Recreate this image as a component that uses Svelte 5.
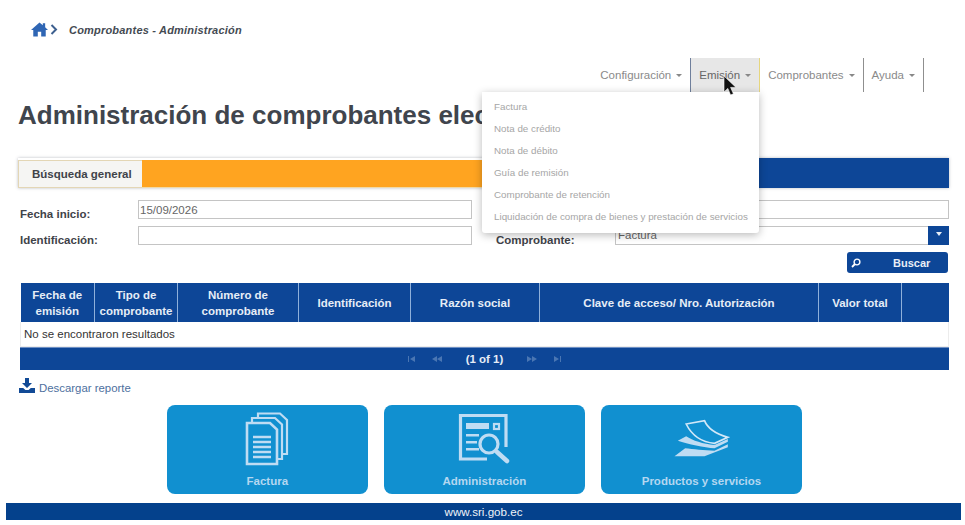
<script lang="ts">
  const navItems = ['Configuración', 'Emisión', 'Comprobantes', 'Ayuda'];
  const emision = [
    'Factura',
    'Nota de crédito',
    'Nota de débito',
    'Guía de remisión',
    'Comprobante de retención',
    'Liquidación de compra de bienes y prestación de servicios'
  ];
  const columns = [
    { label: ['Fecha de', 'emisión'], width: 74 },
    { label: ['Tipo de', 'comprobante'], width: 83 },
    { label: ['Número de', 'comprobante'], width: 121 },
    { label: ['Identificación'], width: 112 },
    { label: ['Razón social'], width: 129 },
    { label: ['Clave de acceso/ Nro. Autorización'], width: 279 },
    { label: ['Valor total'], width: 83 },
    { label: [''], width: 47 }
  ];
</script>

<div class="page">
  <div class="breadcrumb">
    <svg class="home" viewBox="0 0 18 15" width="17" height="15">
      <path fill="#2f66b4" d="M9 0 L12.5 3 V1 H15 V5.2 L18 8 H15.6 V15 H10.8 V10 H7.2 V15 H2.4 V8 H0 Z" />
    </svg>
    <svg class="chev" viewBox="0 0 8 11" width="8" height="11">
      <path fill="none" stroke="#3d5f8f" stroke-width="2" d="M1.5 1 L6 5.5 L1.5 10" />
    </svg>
    <span>Comprobantes - Administración</span>
  </div>

  <nav class="nav">
    {#each navItems as item}
      <div class="nav-item" class:open={item === 'Emisión'}>
        {item}<span class="caret"></span>
      </div>
    {/each}
    <div class="menu">
      {#each emision as entry}
        <div class="menu-item">{entry}</div>
      {/each}
    </div>
    <svg class="cursor" viewBox="0 0 14 22" width="14" height="22">
      <path fill="#111" stroke="#fff" stroke-width="0.6" d="M1 1 V17 L4.8 13.4 L7.6 20 L10.4 18.8 L7.6 12.4 H13 Z" />
    </svg>
  </nav>

  <h1>Administración de comprobantes electrónicos</h1>

  <div class="tabs">
    <div class="tab">Búsqueda general</div>
    <div class="tab-fill"></div>
    <div class="tab-end"></div>
  </div>

  <div class="form">
    <label for="inicio">Fecha inicio:</label>
    <input id="inicio" value="15/09/2026" />
    <label for="fin">Fecha fin:</label>
    <input id="fin" />
    <label for="ident">Identificación:</label>
    <input id="ident" />
    <label for="tipo">Comprobante:</label>
    <div id="tipo" class="select">
      <span>Factura</span>
      <div class="select-btn"><span class="select-caret"></span></div>
    </div>
  </div>

  <div class="actions">
    <button class="search">
      <svg viewBox="0 0 10 10" width="10" height="10">
        <circle cx="6" cy="4" r="2.9" fill="none" stroke="#fff" stroke-width="1.4" />
        <path stroke="#fff" stroke-width="1.8" d="M4 6 L1 9" />
      </svg>
      <span>Buscar</span>
    </button>
  </div>

  <table>
    <colgroup>
      {#each columns as col}
        <col style="width: {col.width}px" />
      {/each}
    </colgroup>
    <thead>
      <tr>
        {#each columns as col}
          <th>
            {#each col.label as line}
              <div>{line}</div>
            {/each}
          </th>
        {/each}
      </tr>
    </thead>
    <tbody>
      <tr>
        <td colspan="8">No se encontraron resultados</td>
      </tr>
    </tbody>
  </table>
  <div class="pager">
    <svg viewBox="0 0 10 6" width="10" height="6"><path fill="#4a76b3" d="M1 0 H2 V6 H1 Z M8 0 V6 L3 3 Z" /></svg>
    <svg viewBox="0 0 10 6" width="10" height="6"><path fill="#4a76b3" d="M5 0 V6 L0 3 Z M10 0 V6 L5 3 Z" /></svg>
    <strong>(1 of 1)</strong>
    <svg viewBox="0 0 10 6" width="10" height="6"><path fill="#4a76b3" d="M0 0 V6 L5 3 Z M5 0 V6 L10 3 Z" /></svg>
    <svg viewBox="0 0 10 6" width="10" height="6"><path fill="#4a76b3" d="M2 0 V6 L7 3 Z M8 0 H9 V6 H8 Z" /></svg>
  </div>

  <a class="download" href="#reporte">
    <svg viewBox="0 0 16 15" width="16" height="15">
      <path fill="#114a96" d="M6 0 H10 V5 H13 L8 10 L3 5 H6 Z M0 10 H4.2 L6.4 12 H9.6 L11.8 10 H16 V15 H0 Z" />
    </svg>
    <span>Descargar reporte</span>
  </a>

  <div class="shortcuts">
    <div class="card">
      <div class="card-icon">
        <svg viewBox="0 0 44 54" width="44" height="54" fill="none" stroke="#bfdcf3" stroke-width="2.2">
          <path d="M13 6 V1.5 H35 L42 8 V42 H38" />
          <path d="M7 10 V6 H30 L37 12.5 V47 H33" />
          <path fill="#1190d0" stroke-width="2.6" d="M2 11 H25 L32 17.5 V52 H2 Z" />
          <path stroke-width="2.5" d="M8 25 H26 M8 30 H26 M8 35 H26 M8 40 H26 M8 45 H26" />
        </svg>
      </div>
      <span>Factura</span>
    </div>
    <div class="card">
      <div class="card-icon">
        <svg viewBox="0 0 54 52" width="54" height="52" fill="none" stroke="#bfdcf3">
          <path stroke-width="3.2" d="M49 34 V2.5 H3.5 V46 H30" />
          <path fill="#bfdcf3" stroke="none" d="M9 10 H32 V16 H9 Z M9 21 H22 V23.5 H9 Z M9 28 H20 V30.5 H9 Z M9 35 H22 V37.5 H9 Z" />
          <rect x="37" y="11" width="5" height="5" stroke-width="2.2" />
          <circle cx="32" cy="31" r="9" fill="#1190d0" stroke-width="3.2" />
          <path stroke-width="4.5" stroke-linecap="round" d="M40 39 L50 48" />
        </svg>
      </div>
      <span>Administración</span>
    </div>
    <div class="card">
      <div class="card-icon">
        <svg viewBox="36 30 170 120" width="57" height="40">
          <path fill="none" stroke="#d2e8f8" stroke-width="5" d="M75 45 L130 35 C140 60 165 75 200 85 L160 103 C125 100 95 85 75 45 Z" />
          <path fill="#bfdcf3" d="M75 82 L50 95 C80 105 130 115 160 118 L200 98 V90 L160 108 C125 105 95 95 75 82 Z" />
          <path fill="#bfdcf3" d="M72 118 L40 142 H130 L200 115 V106 L160 125 C130 125 95 120 72 118 Z" />
        </svg>
      </div>
      <span>Productos y servicios</span>
    </div>
  </div>

  <footer>www.sri.gob.ec</footer>
</div>

<style>
  :global(body) {
    margin: 0;
    background: #fff;
  }

  .page {
    width: 965px;
    height: 525px;
    box-sizing: border-box;
    padding: 22px 16px 0 18px;
    font-family: "Liberation Sans", Arial, sans-serif;
    font-size: 11.5px;
    color: #333;
    overflow: hidden;
  }

  .breadcrumb {
    display: flex;
    align-items: center;
    height: 15px;
    margin-left: 13px;
    font-size: 11px;
    font-style: italic;
    font-weight: bold;
    color: #444a52;
    letter-spacing: 0.2px;
  }

  .home {
    margin-right: 2px;
  }

  .chev {
    margin-right: 11px;
  }

  .nav {
    position: relative;
    display: flex;
    justify-content: flex-end;
    height: 34px;
    margin-top: 21px;
    margin-right: 25px;
  }

  .nav-item {
    display: flex;
    align-items: center;
    padding: 0 8px;
    height: 34px;
    color: #8a8a8a;
    border-right: 1px solid #8f8f8f;
  }

  .nav-item.open {
    background: #e7e7e7;
    color: #666;
    border-left: 1px solid #6f7f9c;
    border-right: 1px solid #e6d67e;
    margin-left: -1px;
  }

  .caret {
    width: 0;
    height: 0;
    margin-left: 5px;
    margin-top: 1px;
    border-left: 3.5px solid transparent;
    border-right: 3.5px solid transparent;
    border-top: 3.5px solid #888;
  }

  .menu {
    position: absolute;
    z-index: 3;
    left: 464px;
    top: 34px;
    width: 277px;
    height: 141px;
    box-sizing: border-box;
    padding: 3.5px 0 0 12px;
    background: #fff;
    border-radius: 0 0 3px 3px;
    box-shadow: 0 2px 8px rgba(0, 0, 0, 0.28);
    font-size: 9.8px;
    color: #a6a6a6;
  }

  .menu-item {
    height: 22.2px;
    line-height: 22.2px;
    white-space: nowrap;
  }

  .cursor {
    position: absolute;
    z-index: 4;
    left: 705px;
    top: 17px;
  }

  h1 {
    margin: 8px 0 0;
    height: 30px;
    line-height: 30px;
    font-size: 26px;
    font-weight: bold;
    color: #40454d;
    white-space: nowrap;
  }

  .tabs {
    display: flex;
    height: 30px;
    margin-top: 28px;
    box-shadow: 0 0 3px rgba(60, 70, 90, 0.35);
  }

  .tab {
    width: 124px;
    box-sizing: border-box;
    margin-top: 2px;
    padding: 0 0 2px 13px;
    line-height: 26px;
    background: #f5f5f3;
    border: 1px solid #e3d6b5;
    border-right: none;
    font-weight: bold;
    color: #3f4349;
  }

  .tab-fill {
    width: 500px;
    margin-top: 2px;
    background: #ffa420;
    border-bottom: 1px solid #f0d9a8;
  }

  .tab-end {
    flex: 1;
    background: #0d4697;
  }

  .form {
    display: grid;
    grid-template-columns: 118px 334px 143px 334px;
    row-gap: 7px;
    margin: 12px 0 0 2px;
  }

  .form label {
    height: 19px;
    line-height: 28px;
    font-weight: bold;
    color: #3f4349;
  }

  .form label:nth-of-type(even) {
    margin-left: 24px;
  }

  .form input,
  .select {
    box-sizing: border-box;
    height: 19px;
    width: 334px;
    padding: 0 1px;
    border: 1px solid #c4c4c4;
    background: #fff;
    font: 11.5px "Liberation Sans", Arial, sans-serif;
    color: #666;
  }

  .select {
    display: flex;
    justify-content: space-between;
    line-height: 17px;
    padding: 0 0 0 2px;
  }

  .select-btn {
    display: flex;
    justify-content: center;
    align-items: center;
    width: 21px;
    height: 19px;
    margin: -1px -1px 0 0;
    background: #0d4697;
  }

  .select-caret {
    width: 0;
    height: 0;
    margin-bottom: 4px;
    border-left: 3.5px solid transparent;
    border-right: 3.5px solid transparent;
    border-top: 4px solid #e8eef6;
  }

  .actions {
    display: flex;
    justify-content: flex-end;
    margin-top: 7px;
    margin-right: 1px;
  }

  .search {
    display: flex;
    align-items: center;
    width: 101px;
    height: 21px;
    padding: 0 0 0 4px;
    border: none;
    border-radius: 3px;
    background: #0d4697;
    color: #e9eef6;
    font: bold 11px "Liberation Sans", Arial, sans-serif;
  }

  .search span {
    margin-left: 32px;
  }

  table {
    table-layout: fixed;
    width: 928px;
    margin: 10px 0 0 2px;
    border-collapse: collapse;
  }

  th {
    height: 39px;
    padding: 0;
    background: #0d4697;
    border-left: 1px solid #8fb0da;
    color: #e6edf6;
    font-size: 11.5px;
    line-height: 16px;
    font-weight: bold;
    text-align: center;
  }

  th:first-child {
    border-left: none;
  }

  td {
    height: 24px;
    padding: 1px 0 0 3px;
    box-sizing: border-box;
    color: #333;
    background: #fff;
    border: 1px solid #ececec;
    border-top: none;
  }

  .pager {
    display: flex;
    align-items: center;
    justify-content: center;
    gap: 15px;
    width: 929px;
    height: 23px;
    margin-left: 2px;
    background: #0d4697;
    border-top: 1px solid #6d8fc4;
    box-sizing: border-box;
    color: #e6edf6;
  }

  .pager strong {
    margin: 0 9px;
    font-size: 11.5px;
  }

  .download {
    display: flex;
    align-items: flex-start;
    gap: 4px;
    width: fit-content;
    margin: 8px 0 0 1px;
    height: 18px;
    color: #4d6f9e;
    text-decoration: none;
    font-size: 11.4px;
  }

  .download span {
    padding-top: 4px;
  }

  .shortcuts {
    display: flex;
    gap: 16.5px;
    margin: 9px 0 0 149px;
  }

  .card {
    display: flex;
    flex-direction: column;
    align-items: center;
    gap: 8px;
    box-sizing: border-box;
    width: 200.6px;
    height: 89px;
    padding-top: 6px;
    border-radius: 8px;
    background: #1190d0;
    color: #b4d7f0;
    font-weight: bold;
    font-size: 11.5px;
  }

  .card-icon {
    display: flex;
    align-items: center;
    height: 56px;
  }

  footer {
    width: 955px;
    height: 17px;
    line-height: 17px;
    margin: 9px 0 0 -12px;
    background: #04418c;
    color: #eef3f9;
    text-align: center;
    font-size: 11.6px;
  }
</style>
